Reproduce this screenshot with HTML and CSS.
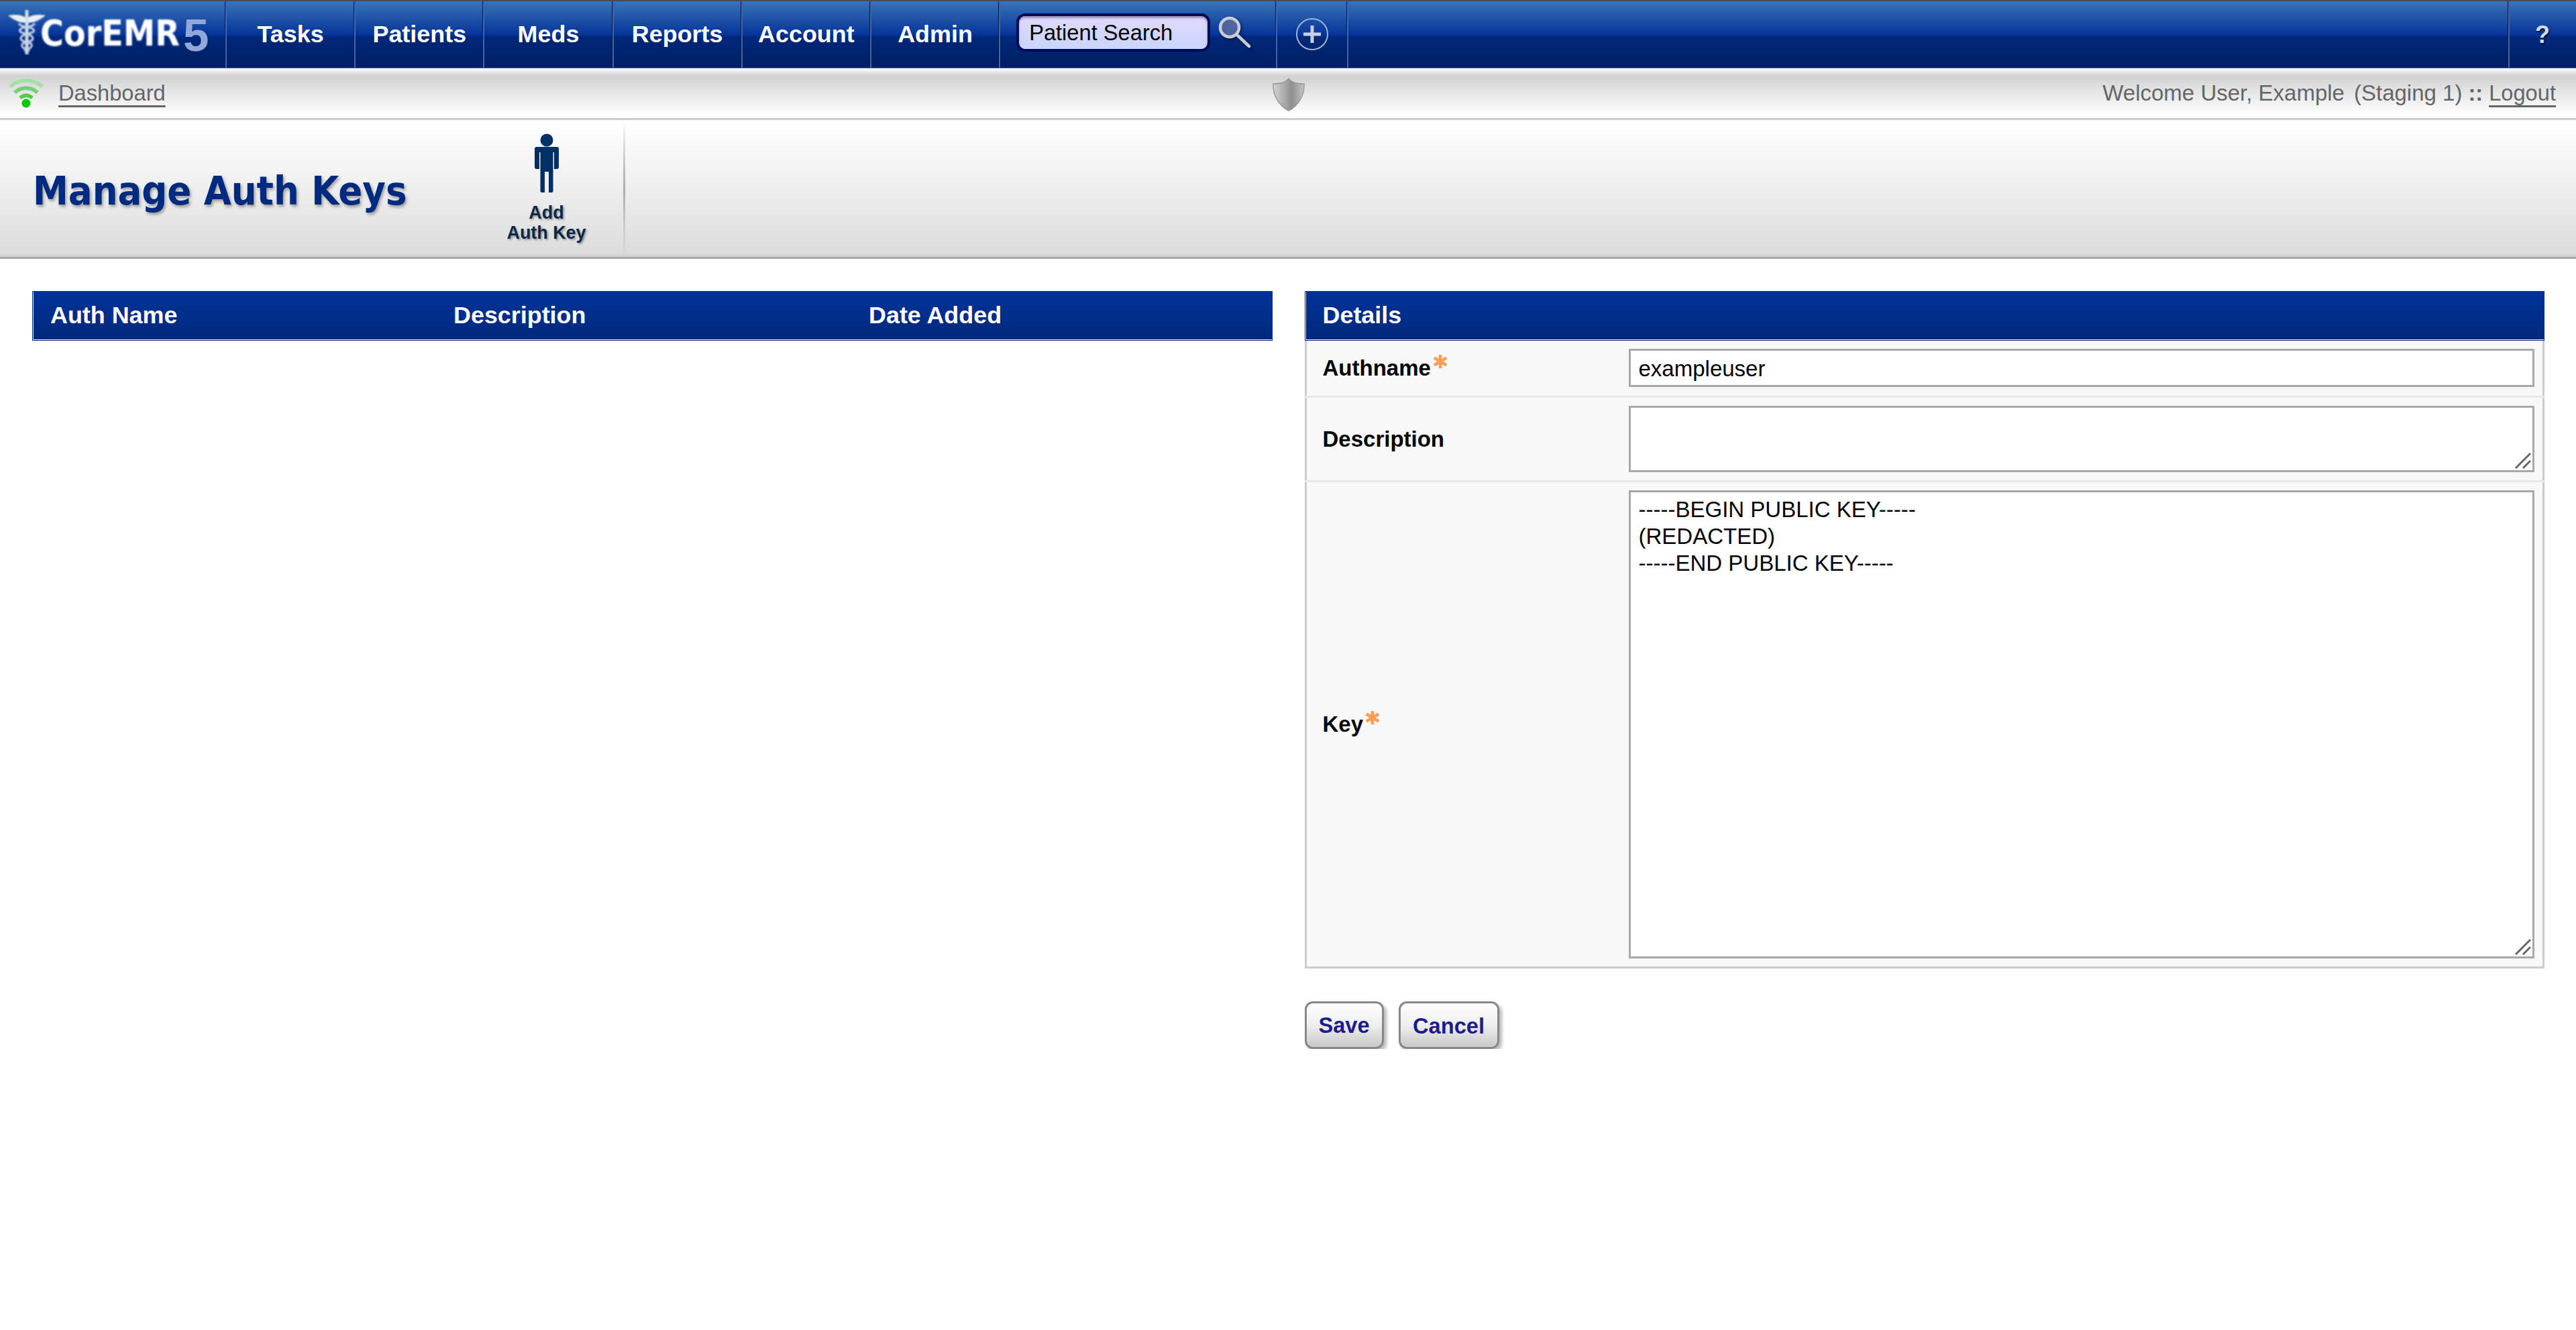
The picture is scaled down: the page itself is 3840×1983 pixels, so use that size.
FILE: index.html
```html
<!DOCTYPE html>
<html lang="en">
<head>
<meta charset="utf-8">
<title>Manage Auth Keys</title>
<link rel="stylesheet" href="styles.css">
</head>
<body>
<nav class="topbar">
  <div class="logo">
    <svg class="caduceus" viewBox="0 0 60 70" width="60" height="70">
      <path class="wing" d="M2 10 C14 8 22 9 28 13 L28 21 C20 21 12 18 2 10Z M58 10 C46 8 38 9 32 13 L32 21 C40 21 48 18 58 10Z"/>
      <path class="staff" d="M30 2 V68"/>
      <path class="coil" d="M18 22 C24 30 36 26 40 31 C44 38 22 36 21 44 C21 52 40 48 37 56 C35 61 28 60 26 63"/>
      <path class="coil" d="M42 22 C36 30 24 26 20 31 C16 38 38 36 39 44 C39 52 20 48 23 56 C25 61 32 60 34 63"/>
    </svg>
    <span class="logo-name">CorEMR</span><span class="logo-five">5</span>
  </div>
  <a class="menu-item">Tasks</a>
  <a class="menu-item">Patients</a>
  <a class="menu-item">Meds</a>
  <a class="menu-item">Reports</a>
  <a class="menu-item">Account</a>
  <a class="menu-item">Admin</a>
  <div class="search-cell">
    <input class="search-input" type="text" value="Patient Search">
    <svg class="search-icon" viewBox="0 0 54 54" width="54" height="54">
      <circle class="lens" cx="18" cy="19" r="14"/>
      <path class="lens-handle" d="M29 30 L47 47"/>
    </svg>
  </div>
  <div class="plus-cell">
    <svg class="plus-icon" viewBox="0 0 50 50" width="50" height="50">
      <circle class="plus-ring" cx="25" cy="25" r="23"/>
      <path class="plus-mark" d="M12 25 H38 M25 12 V38"/>
    </svg>
  </div>
  <div class="nav-spacer"></div>
  <a class="help-cell">?</a>
</nav>

<div class="subbar">
  <div class="sub-left">
    <svg class="wifi" viewBox="0 0 54 46" width="54" height="46">
      <path class="wifi-outer" d="M3 13 C17 1 37 1 51 13"/>
      <path class="wifi-mid" d="M10 22 C20 13 34 13 44 22"/>
      <path class="wifi-inner" d="M18 30 C24 25 30 25 36 30"/>
      <circle class="wifi-dot" cx="27" cy="38" r="6.5"/>
    </svg>
    <a class="sub-link">Dashboard</a>
  </div>
  <svg class="shield" viewBox="0 0 50 50" width="50" height="50">
    <defs>
      <linearGradient id="shieldFill" x1="0" x2="1" y1="0" y2="0">
        <stop offset="0" stop-color="#d4d4d4"/>
        <stop offset="0.6" stop-color="#8f8f8f"/>
        <stop offset="1" stop-color="#c4c4c4"/>
      </linearGradient>
    </defs>
    <path class="shield-shape" fill="url(#shieldFill)" d="M25 1 C29 7 38 9 48 9 C49 26 39 42 25 49 C11 42 1 26 2 9 C12 9 21 7 25 1Z"/>
  </svg>
  <div class="sub-right">
    <span class="sub-user">Welcome User, Example</span>
    <span class="sub-env">(Staging 1)</span>
    <b class="sub-colons">::</b>
    <a class="sub-link">Logout</a>
  </div>
</div>

<header class="pagehead">
  <h1 class="pagetitle">Manage Auth Keys</h1>
  <a class="tool">
    <svg class="person" viewBox="0 0 38 88" width="38" height="88">
      <circle cx="19" cy="10" r="9.5"/>
      <path d="M4 20 H34 Q37 20 37 23 V50 Q37 53 34 53 H30 V28 H28.5 V86 Q28.5 88 26.5 88 H22 V57 H16 V88 H11.5 Q9.5 88 9.5 86 V28 H8 V53 H4 Q1 53 1 50 V23 Q1 20 4 20Z"/>
    </svg>
    <span class="tool-label">Add<br>Auth Key</span>
  </a>
</header>

<main class="content">
  <section class="list-pane">
    <div class="tablehead list-head">
      <span>Auth Name</span>
      <span>Description</span>
      <span>Date Added</span>
    </div>
  </section>
  <section class="detail-pane">
    <div class="tablehead">Details</div>
    <form class="detail-form">
      <div class="form-row">
        <label class="form-label">Authname<svg class="req" viewBox="0 0 24 24" width="22" height="22"><path d="M12 1 V23 M2 6 L22 18 M22 6 L2 18"/></svg></label>
        <div class="form-field"><input class="text-input" type="text" value="exampleuser"></div>
      </div>
      <div class="row-sep"></div>
      <div class="form-row">
        <label class="form-label">Description</label>
        <div class="form-field grip-wrap">
          <textarea class="text-area area-short"></textarea>
          <svg class="grip" viewBox="0 0 24 24" width="24" height="24"><path d="M1 23 L23 1 M12 23 L23 12"/></svg>
        </div>
      </div>
      <div class="row-sep"></div>
      <div class="form-row">
        <label class="form-label">Key<svg class="req" viewBox="0 0 24 24" width="22" height="22"><path d="M12 1 V23 M2 6 L22 18 M22 6 L2 18"/></svg></label>
        <div class="form-field grip-wrap">
          <textarea class="text-area area-tall">-----BEGIN PUBLIC KEY-----
(REDACTED)
-----END PUBLIC KEY-----</textarea>
          <svg class="grip" viewBox="0 0 24 24" width="24" height="24"><path d="M1 23 L23 1 M12 23 L23 12"/></svg>
        </div>
      </div>
    </form>
    <div class="actions">
      <button class="btn btn-save" type="button">Save</button>
      <button class="btn btn-cancel" type="button">Cancel</button>
    </div>
  </section>
</main>
</body>
</html>
```
FILE: styles.css
```css
* { box-sizing: border-box; }
html, body { margin: 0; padding: 0; background: #fff; }
body { font-family: "Liberation Sans", Arial, sans-serif; font-size: 32.65px; color: #000; }

/* top navigation */
.topbar {
  display: flex;
  height: 102px;
  border-top: 2px solid #454c58;
  border-bottom: 1px solid #5b7cba;
  background: linear-gradient(#3a74b9 0, #2a62ad 14%, #06349a 50%, #00287a 54%, #001e63 100%);
}
.logo { width: 335px; position: relative; display: flex; align-items: flex-start; padding-left: 60px; }
.caduceus { position: absolute; left: 10px; top: 11px; filter: blur(.8px); }
.caduceus .wing { fill: #e8edf6; }
.caduceus .staff { stroke: #d4dcec; stroke-width: 5; fill: none; }
.caduceus .coil { stroke: #c5d0e6; stroke-width: 3; fill: none; }
.logo-name {
  margin-top: 21px;
  font-family: "DejaVu Sans Condensed", "DejaVu Sans", sans-serif;
  font-stretch: condensed;
  font-weight: 700;
  font-size: 53px;
  line-height: 53px;
  color: #fff;
  filter: blur(.8px);
}
.logo-five { margin: 16px 0 0 5px; font-weight: 700; font-size: 69px; line-height: 69px; color: #90a8da; filter: blur(.7px); }

.menu-item {
  width: 192.2px;
  display: flex;
  align-items: center;
  justify-content: center;
  padding-left: 3px;
  color: #fff;
  font-weight: 700;
  font-size: 35.9px;
  border-left: 1px solid #00184e;
  box-shadow: inset 2px 0 0 #3c67ac;
}
.search-cell {
  width: 413px;
  display: flex;
  align-items: flex-start;
  padding: 18px 0 0 26px;
  border-left: 1px solid #00184e;
  box-shadow: inset 2px 0 0 #3c67ac;
}
.search-input {
  width: 289px;
  height: 57px;
  border: 4px solid #000a55;
  border-radius: 13px;
  background: linear-gradient(#e1d8fb, #c8d5fb);
  box-shadow: inset 0 3px 3px rgba(70, 60, 110, .45);
  font: 32.65px "Liberation Sans", Arial, sans-serif;
  color: #000;
  padding: 0 14px 0 15px;
  outline: none;
}
.search-icon { margin: 2px 0 0 11px; overflow: visible; filter: drop-shadow(2px 2px 2px rgba(0, 0, 20, .5)) blur(.4px); }
.lens { fill: rgba(120, 140, 190, .6); stroke: #c9cdd6; stroke-width: 4.5; }
.lens-handle { stroke: #c9cdd6; stroke-width: 4.5; stroke-linecap: round; }
.plus-cell {
  width: 106px;
  display: flex;
  align-items: center;
  justify-content: center;
  padding: 0 0 2px 3px;
  border-left: 1px solid #00184e;
  box-shadow: inset 2px 0 0 #3c67ac;
}
.plus-ring { fill: none; stroke: #a3b3d2; stroke-width: 2; }
.plus-mark { stroke: #c8cfe0; stroke-width: 5; fill: none; }
.nav-spacer { flex: 1; border-left: 1px solid #00184e; box-shadow: inset 2px 0 0 #3c67ac; }
.help-cell {
  width: 102px;
  display: flex;
  align-items: center;
  justify-content: center;
  padding-left: 1px;
  font-weight: 700;
  font-size: 36px;
  color: #d3dbee;
  text-shadow: 1px 2px 2px #001030;
  border-left: 1px solid #00184e;
  box-shadow: inset 2px 0 0 #3c67ac;
}

/* status strip */
.subbar {
  height: 77px;
  display: grid;
  grid-template-columns: 1fr auto 1fr;
  align-items: center;
  padding: 0 30px;
  border-bottom: 3px solid #cdcdcd;
  background: linear-gradient(#fff 0, #d2d2d2 11px, #fff 68px);
  color: #666;
}
.sub-left { display: flex; align-items: center; gap: 21px; margin-left: -18px; }
.sub-link { color: #666; text-decoration: underline; text-decoration-thickness: 3px; text-underline-offset: 7px; }
.sub-right { justify-self: end; display: flex; gap: 9px; white-space: pre; }
.sub-user, .sub-env { font-size: 33px; }
.sub-env { margin-left: 5px; }
.sub-colons { color: #666; }
.wifi { filter: blur(.6px); }
.wifi path { fill: none; stroke-width: 5.5; }
.wifi-outer { stroke: #a3dea3; }
.wifi-mid { stroke: #72d272; }
.wifi-inner { stroke: #4ecb4e; }
.wifi-dot { fill: #00c800; }
.shield { margin: 4px 0 0 2px; filter: blur(.5px); }
.shield-shape { stroke: #999; stroke-width: 1.5; }

/* page heading */
.pagehead {
  height: 207px;
  display: flex;
  align-items: stretch;
  padding-left: 49px;
  border-bottom: 3px solid #a9a9a9;
  background: linear-gradient(#fff 0, #f0f0f0 45%, #dcdcdc 97%, #cfcfcf 100%);
}
.pagetitle {
  width: 651px;
  margin: 0;
  align-self: center;
  font-family: "DejaVu Sans Condensed", "DejaVu Sans", sans-serif;
  font-stretch: condensed;
  font-weight: 700;
  font-size: 59px;
  line-height: 1;
  padding-top: 6px;
  color: #002a80;
  text-shadow: 2px 3px 4px rgba(0, 0, 0, .35);
}
.tool {
  width: 232px;
  display: flex;
  flex-direction: column;
  align-items: center;
  padding: 20px 0 0 0;
  border-right: 3px solid;
  border-image: linear-gradient(rgba(170, 170, 170, 0), #aaa 50%, rgba(170, 170, 170, 0)) 1;
}
.person { fill: #003066; filter: blur(.6px); }
.tool-label {
  margin-top: 15px;
  font-weight: 700;
  font-size: 26.9px;
  line-height: 30px;
  text-align: center;
  color: #0c2848;
  text-shadow: 2px 2px 3px rgba(0, 0, 0, .35);
}

/* content */
.content {
  display: grid;
  grid-template-columns: 1fr 1fr;
  gap: 48px;
  padding: 48px 47px 0 48px;
}
.tablehead {
  height: 74px;
  display: flex;
  align-items: center;
  padding: 0 24px 2px 26px;
  font-weight: 700;
  font-size: 35.9px;
  color: #fff;
  border: 1px solid #002a80;
  background: linear-gradient(#003399, #00287c);
  box-shadow: inset 1px 0 0 #dfe6f5, inset 0 -1px 0 #fff;
}
.list-head { display: grid; grid-template-columns: 601px 619px 1fr; }

.form-row {
  display: grid;
  grid-template-columns: 480px 1fr;
  align-items: center;
  background: #f8f8f8;
  border-left: 3px solid #ccc;
  border-right: 3px solid #ccc;
}
.row-sep { height: 3px; background: #e8e8e8; }
.form-row:last-child { border-bottom: 3px solid #ccc; }
.form-label { margin-left: 24px; width: fit-content; position: relative; font-size: 33px; font-weight: 700; display: block; }
.req { position: absolute; left: calc(100% + 3px); top: -2px; stroke: #ff9c52; stroke-width: 5; fill: none; filter: blur(.5px); }
.form-field { padding: 12px 12px 12px 0; line-height: 0; }
.form-row:first-child .form-field { padding-bottom: 13px; }
.text-input, .text-area {
  display: block;
  width: 100%;
  border: 3px solid #a8a8a8;
  background: #fff;
  color: #000;
  font: 33px/40px "Liberation Sans", Arial, sans-serif;
  padding: 6px 12px 4px;
  margin: 0;
  border-radius: 0;
  outline: none;
  resize: none;
}
.text-input { height: 57px; }
.area-short { height: 99px; }
.area-tall { height: 698px; }
.grip-wrap { position: relative; }
.grip { position: absolute; right: 17px; bottom: 17px; stroke: #666; stroke-width: 3; fill: none; }

.actions { display: flex; align-items: flex-start; gap: 22px; margin-top: 49px; }
.btn {
  height: 71px;
  margin: 0;
  padding: 0;
  border: 3px solid #888;
  border-radius: 12px;
  background: linear-gradient(#fff 0, #eee 50%, #c9c9c9 100%);
  box-shadow: 4px 4px 5px rgba(0, 0, 0, .28);
  font: 700 32.65px "Liberation Sans", Arial, sans-serif;
  color: #1c1c8c;
}
.btn-save { width: 118px; }
.btn-cancel { width: 150px; padding-top: 3px; }
```
